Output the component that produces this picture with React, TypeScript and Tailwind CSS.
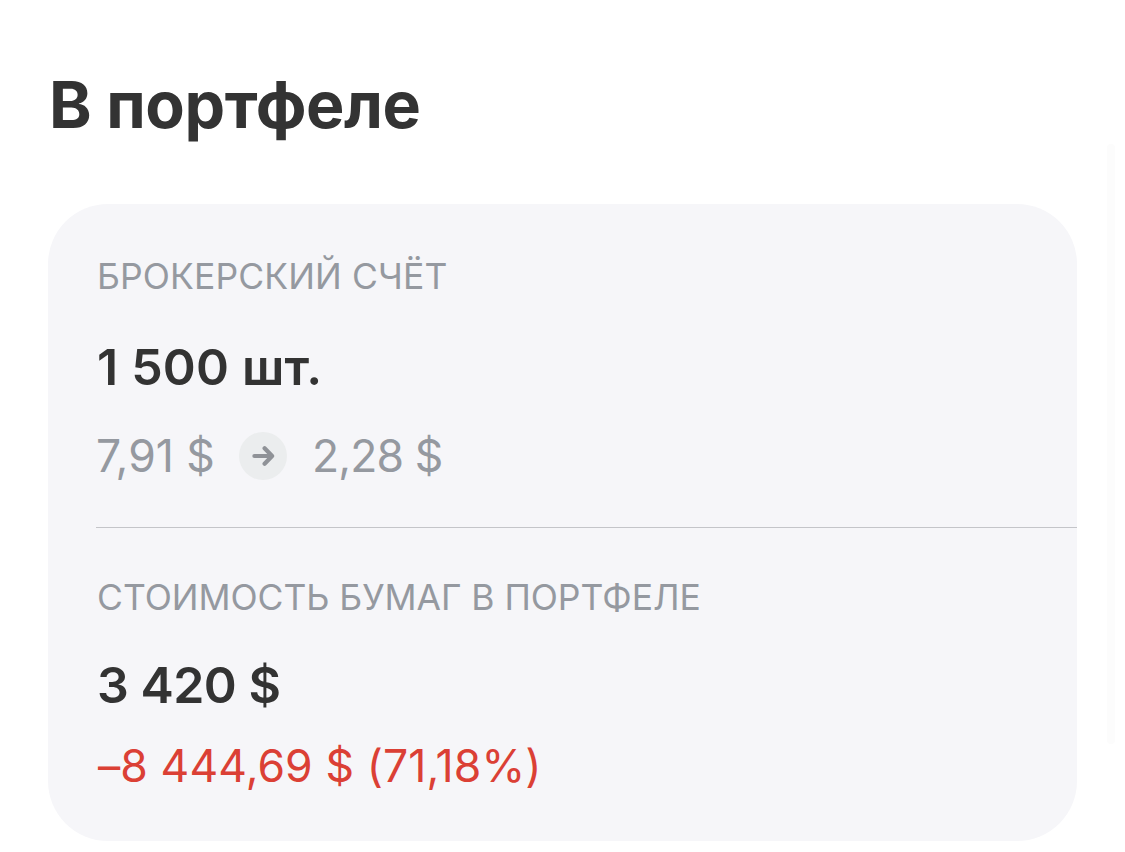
interface Position {
  label: string;
  value: string;
}

const account: Position = { label: 'БРОКЕРСКИЙ СЧЁТ', value: '1 500 шт.' };
const total: Position = { label: 'СТОИМОСТЬ БУМАГ В ПОРТФЕЛЕ', value: '3 420 $' };

function ArrowBadge() {
  return (
    <span className="flex h-12 w-12 items-center justify-center rounded-full bg-[#ebedee]">
      <svg
        className="h-6 w-6"
        viewBox="0 0 24 24"
        fill="none"
        stroke="#8f9297"
        strokeWidth="4.2"
        strokeLinecap="round"
        strokeLinejoin="round"
      >
        <path d="M3.4 12h17.4M13.6 4.2l7.5 7.8-7.5 7.8" />
      </svg>
    </span>
  );
}

export default function App() {
  return (
    <div className="flex h-[852px] w-[1125px] overflow-hidden bg-white font-['Inter',sans-serif] text-[#333333] whitespace-nowrap">
      <main className="ml-12 w-[1029px] pt-[63px]">
        <h1 className="h-[141px] pl-px text-[64.5px] leading-[84px] font-bold tracking-[-0.4px]">В портфеле</h1>

        <section className="h-[637px] rounded-[60px] bg-[#f6f6f9] pl-12">
          <div className="h-[324px] border-b border-[#c4c5c9] pt-[49px]">
            <p className="pl-px text-[35.5px] leading-[48px] tracking-[0.1px] text-[#9599a0]">{account.label}</p>
            <p className="mt-[34px] pl-px text-[50px] leading-[64px] font-semibold tracking-[0.2px]">{account.value}</p>
            <div className="mt-[33px] flex h-12 items-center text-[44.5px] text-[#9599a0]">
              <span className="w-[143px]">7,91 $</span>
              <ArrowBadge />
              <span className="ml-[25px] tracking-[-0.9px]">2,28 $</span>
            </div>
          </div>

          <p className="pt-[46px] pl-px text-[35.5px] leading-[48px] tracking-[-0.05px] text-[#9599a0]">{total.label}</p>
          <p className="mt-[31px] pl-px text-[50px] leading-[64px] font-semibold tracking-[-0.5px]">{total.value}</p>
          <p className="mt-[17px] pl-0.5 text-[44.5px] leading-[64px] tracking-[0.1px] text-[#db4035]">–8 444,69 $ (71,18%)</p>
        </section>
      </main>

      {/* Scroll track */}
      <div className="mt-[144px] ml-[30px] h-[600px] w-2 rounded-full bg-[#fcfcfc]" />
    </div>
  );
}
